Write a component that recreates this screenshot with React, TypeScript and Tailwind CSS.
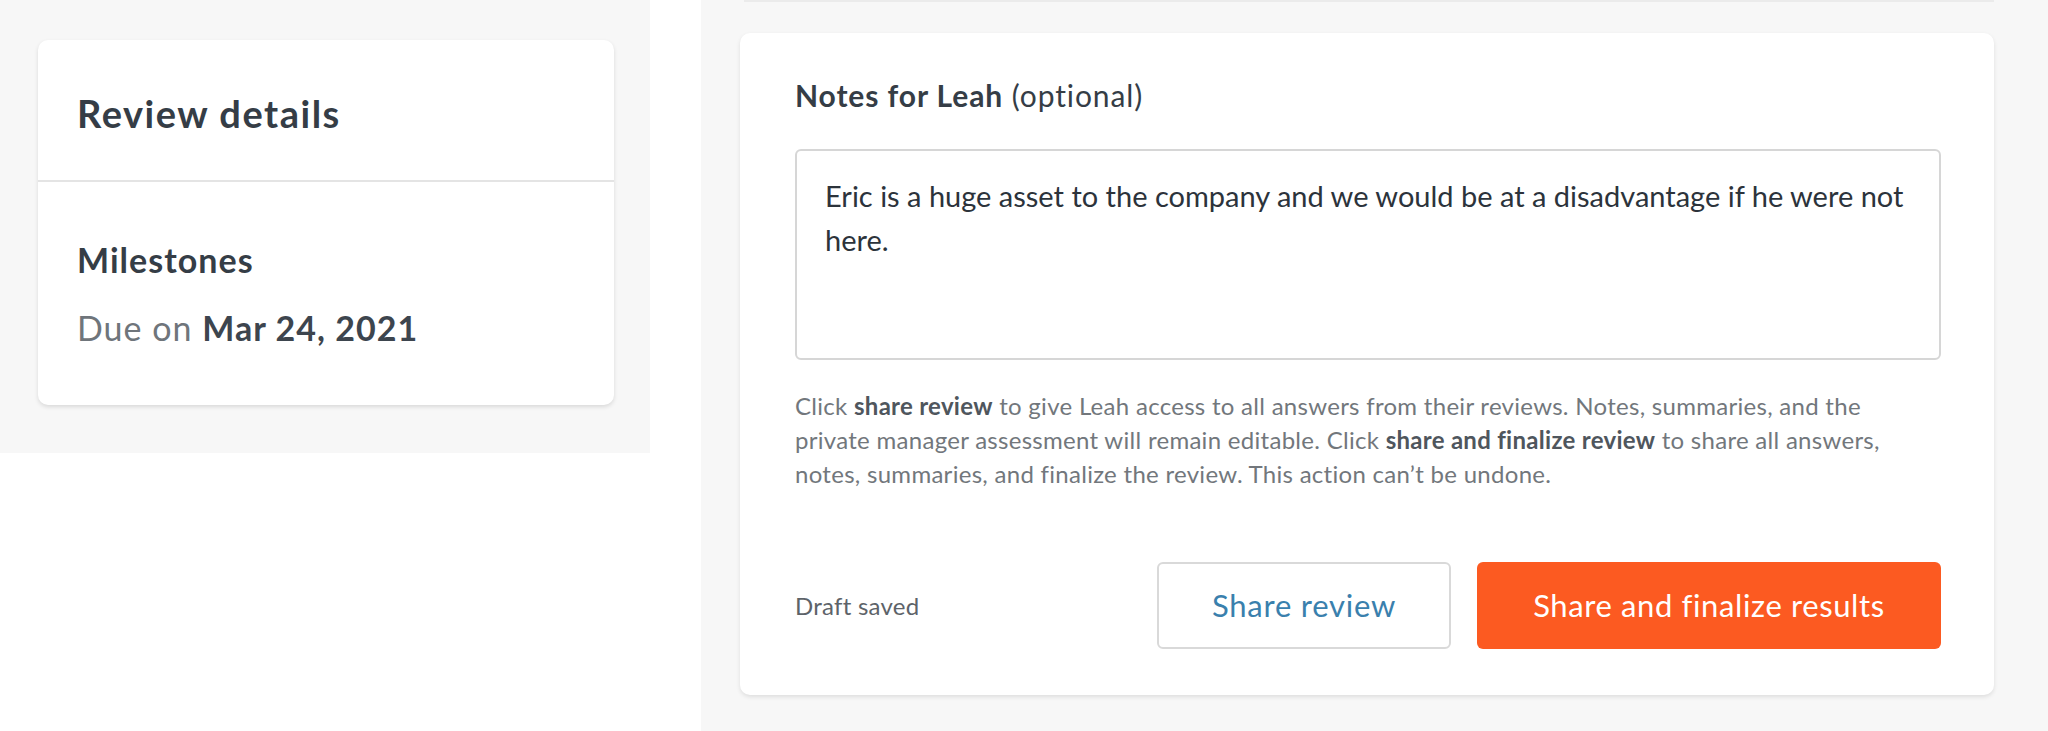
import React from 'react';

const font = { fontFamily: 'Lato, "Open Sans", Arial, sans-serif' };

const ReviewDetails: React.FC = () => (
  <div className="w-[650px] h-[453px] shrink-0 bg-[#f7f7f7] pt-[40px] pl-[38px]">
    <div className="w-[576px] h-[365px] rounded-[10px] bg-white shadow-[0_2px_4px_rgba(0,0,0,0.12)]">
      {/* header */}
      <div className="h-[142px] flex items-center px-[39px] pt-[6px] border-b-2 border-[#e4e4e4]">
        <h2 className="text-[38px] tracking-[0.04em] font-bold text-[#353d46] leading-none">Review details</h2>
      </div>
      {/* body */}
      <div className="px-[39px] pt-[56px]">
        <div className="text-[34px] tracking-[0.03em] leading-[44px] font-bold text-[#353d46]">Milestones</div>
        <div className="mt-[24px] text-[34px] tracking-[0.03em] leading-[44px] text-[#6f757b]">
          Due on <span className="font-bold text-[#3d454e]">Mar 24, 2021</span>
        </div>
      </div>
    </div>
  </div>
);

const NotesCard: React.FC = () => (
  <div className="w-[1254px] h-[662px] rounded-[10px] bg-white shadow-[0_2px_4px_rgba(0,0,0,0.10)] pl-[55px] pr-[53px] pt-[42px]">
    <h3 className="text-[30px] tracking-[0.03em] leading-[40px] text-[#353d46]">
      <span className="font-bold">Notes for Leah</span> (optional)
    </h3>

    {/* textarea */}
    <div className="mt-[34px] h-[211px] border-2 border-[#d6d6d6] rounded-[6px] pl-[28px] pr-[28px] pt-[23px] text-[29px] leading-[44px] text-[#2c333b]">
      Eric is a huge asset to the company and we would be at a disadvantage if he were not
      <br />
      here.
    </div>

    <p className="mt-[29px] text-[24px] tracking-[0.012em] leading-[34px] text-[#72777c]">
      Click <span className="font-bold text-[#4f565d]">share review</span> to give Leah access to all answers from their reviews. Notes, summaries, and the
      <br />
      private manager assessment will remain editable. Click{' '}
      <span className="font-bold text-[#4f565d]">share and finalize review</span> to share all answers,
      <br />
      notes, summaries, and finalize the review. This action can’t be undone.
    </p>

    {/* footer */}
    <div className="mt-[71px] flex items-center justify-between">
      <span className="text-[24px] tracking-[0.01em] text-[#5d6369]">Draft saved</span>
      <div className="flex gap-[26px]">
        <button className="w-[294px] h-[87px] rounded-[6px] border-2 border-[#d9d9d9] bg-white text-[31px] tracking-[0.025em] text-[#3a80ad]">
          Share review
        </button>
        <button className="w-[464px] h-[87px] rounded-[6px] bg-[#fc5a21] text-[31px] tracking-[0.02em] text-white">
          Share and finalize results
        </button>
      </div>
    </div>
  </div>
);

export default function App() {
  return (
    <div style={font} className="w-[2048px] h-[731px] bg-white flex items-start">
      <ReviewDetails />
      <div className="ml-[51px] w-[1347px] h-[731px] bg-[#f7f7f7] pl-[39px]">
        {/* bottom edge of the card above */}
        <div className="w-[1250px] h-[2px] ml-[4px] bg-[#ebebeb]" />
        <div className="mt-[31px]">
          <NotesCard />
        </div>
      </div>
    </div>
  );
}
